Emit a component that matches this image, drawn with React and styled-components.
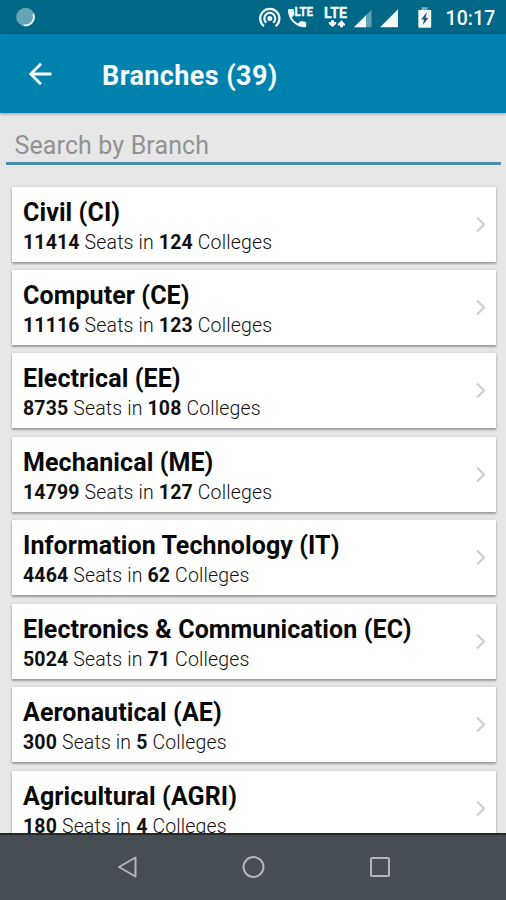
import React from "react";
import styled, { createGlobalStyle } from "styled-components";

const GlobalStyle = createGlobalStyle`
  * { box-sizing: border-box; }
  body { margin: 0; background: #e7e7e7; font-family: Roboto, sans-serif; }
`;

const Screen = styled.div`
  width: 506px;
  height: 900px;
  display: flex;
  flex-direction: column;
  overflow: hidden;
  background: #e7e7e7;
`;

const StatusBar = styled.header`
  flex: none;
  height: 34px;
  display: flex;
  justify-content: space-between;
  background: #006786;
  color: #f4fafc;
`;

const StatusIcons = styled.div`
  display: flex;
  height: 34px;
`;

const Clock = styled.time`
  width: 61px;
  padding: 1px 0 0 0.5px;
  font-size: 19.5px;
  line-height: 35px;
  font-weight: 500;
  letter-spacing: 0.1px;
  white-space: nowrap;
`;

const AppBar = styled.div`
  flex: none;
  height: 79px;
  padding-left: 28px;
  display: flex;
  align-items: center;
  background: #0082ae;
  color: #f7fbfd;
  box-shadow: 0 1px 3px rgba(0, 0, 0, 0.35);
  z-index: 1;
`;

const BackButton = styled.button`
  width: 24px;
  height: 24px;
  margin: 0 50px 0 0;
  padding: 0;
  border: 0;
  background: none;
  color: inherit;
  display: flex;
`;

const PageTitle = styled.h1`
  margin: 4px 0 0;
  font-size: 27px;
  line-height: 32px;
  font-weight: 700;
  letter-spacing: 0.4px;
`;

const SearchField = styled.input`
  flex: none;
  width: 495px;
  height: 46px;
  margin: 6px 0 0 6px;
  padding: 9px 9px 0 8.5px;
  border: 0;
  border-bottom: 3px solid #4b8dad;
  border-radius: 0;
  outline: 0;
  background: transparent;
  font: 400 25px Roboto, sans-serif;
  letter-spacing: 0.12px;
  &::placeholder { color: #929292; opacity: 1; }
`;

const BranchList = styled.main`
  flex: 1;
  min-height: 0;
  overflow: hidden;
  padding: 21.5px 10px 0 12px;
  display: flex;
  flex-direction: column;
  gap: 8.45px;
`;

const BranchCard = styled.article`
  flex: none;
  height: 75px;
  padding: 10px 6px 0 11px;
  display: flex;
  justify-content: space-between;
  background: #fff;
  box-shadow: 0 1.5px 2px rgba(0, 0, 0, 0.3), 0 0 3px rgba(0, 0, 0, 0.14);
`;

const BranchName = styled.h2`
  margin: 0;
  font-size: 25px;
  line-height: 32px;
  font-weight: 700;
  letter-spacing: 0.09px;
  color: #080808;
  white-space: nowrap;
`;

const Summary = styled.p`
  margin: 1px 0 0;
  font-size: 19.5px;
  line-height: 26px;
  font-weight: 300;
  letter-spacing: 0.15px;
  color: #111;
  white-space: nowrap;
  b { font-weight: 700; }
`;

const Chevron = styled.svg`
  width: 20px;
  height: 20px;
  margin-top: 17px;
`;

const NavBar = styled.nav`
  flex: none;
  height: 67px;
  padding: 0 0 2px 1px;
  display: flex;
  justify-content: center;
  align-items: center;
  gap: 102.5px;
  border-top: 2px solid #20292d;
  background: #464d53;
`;

const NavIcon = styled.svg`
  width: 24px;
  height: 24px;
  fill: none;
  stroke: #b0b6b9;
  stroke-width: 2;
`;

const branches = [
  ["Civil (CI)", 11414, 124],
  ["Computer (CE)", 11116, 123],
  ["Electrical (EE)", 8735, 108],
  ["Mechanical (ME)", 14799, 127],
  ["Information Technology (IT)", 4464, 62],
  ["Electronics & Communication (EC)", 5024, 71],
  ["Aeronautical (AE)", 300, 5],
  ["Agricultural (AGRI)", 180, 4],
];

function SyncIcon() {
  return (
    <svg width="48" height="34" viewBox="0 0 48 34">
      <circle cx="25.5" cy="17" r="9.300" fill="#65a3b7" />
      <path d="M33.500 14.500A8.500 8.500 0 0 1 24.500 25.300" fill="none" stroke="#d9eef3" strokeWidth="2" strokeLinecap="round" />
    </svg>
  );
}

function SystemIcons() {
  return (
    <svg width="192" height="34" viewBox="253 0 192 34" fill="currentColor">
      <g fill="none" stroke="currentColor" strokeWidth="2.200">
        <path d="M264 26.200A9.600 9.600 0 1 1 275.600 26.200" />
        <path d="M266.400 22.700A5.500 5.500 0 1 1 273.200 22.700" />
      </g>
      <circle cx="269.800" cy="18.500" r="2.500" />
      <path d="M289 9h3.700q1 0 1.100 1 .1 2 .7 3.700.2.8-.4 1.400L291.700 17.400q2.200 4.200 6.300 6.200l2.400-2.300q.6-.5 1.300-.3 1.800.6 3.500.7 1 .1 1 1.100v3.500q0 1-1 1C295.500 27.300 288 19.500 288 10q0-1 1-1z" />
      <g fontFamily="Roboto, sans-serif" fontWeight="700" stroke="currentColor" strokeWidth=".3">
        <text x="294.500" y="16" fontSize="12" textLength="18.500" lengthAdjust="spacingAndGlyphs">LTE</text>
        <text x="324" y="18" fontSize="14.500" textLength="23" lengthAdjust="spacingAndGlyphs">LTE</text>
      </g>
      <path d="M331 20.300h3v1.700h2.200v1.700L332.500 27.300 328.800 23.700V22H331zM340 27.300h3v-1.700h2v-1.700L341.500 20.300 337.800 24v1.600H340z" />
      <path d="M354 27.300L371.500 9.800v17.500z" opacity=".4" />
      <path d="M354 27.300L366 15.300v12zM380 27.300L398 9.300v18z" />
      <path d="M421.500 7.200h6V10h-6z" opacity=".5" />
      <path d="M419 10h11.500q.7 0 .7.700v16.400q0 .7-.7.700H419q-.7 0-.7-.7V10.700q0-.7.700-.7z" />
      <path d="M427 12l-5.800 7.500h2.800l-1.200 5.500 5.500-7h-2.800z" fill="#24507a" />
    </svg>
  );
}

export default function App() {
  return (
    <>
      <GlobalStyle />
      <Screen>
        <StatusBar>
          <SyncIcon />
          <StatusIcons>
            <SystemIcons />
            <Clock>10:17</Clock>
          </StatusIcons>
        </StatusBar>
        <AppBar>
          <BackButton aria-label="Back">
            <svg width="24" height="24" viewBox="0 0 24 24" fill="none" stroke="currentColor" strokeWidth="2.800">
              <path d="M23.500 12H3M13 1.800L2.800 12 13 22.200" />
            </svg>
          </BackButton>
          <PageTitle>Branches (39)</PageTitle>
        </AppBar>
        <SearchField placeholder="Search by Branch" />
        <BranchList>
          {branches.map(([name, seats, colleges]) => (
            <BranchCard key={name}>
              <div>
                <BranchName>{name}</BranchName>
                <Summary>
                  <b>{seats}</b> Seats in <b>{colleges}</b> Colleges
                </Summary>
              </div>
              <Chevron viewBox="0 0 20 20" fill="none" stroke="#cfcfcf" strokeWidth="2.200">
                <path d="M7 3.500l7 7-7 7" />
              </Chevron>
            </BranchCard>
          ))}
        </BranchList>
        <NavBar>
          <NavIcon viewBox="0 0 24 24">
            <path d="M4 12L20.500 2.500v19z" strokeLinejoin="round" />
          </NavIcon>
          <NavIcon viewBox="0 0 24 24">
            <circle cx="11.500" cy="12" r="10" />
          </NavIcon>
          <NavIcon viewBox="0 0 24 24">
            <rect x="3" y="3" width="18" height="18" rx="1" />
          </NavIcon>
        </NavBar>
      </Screen>
    </>
  );
}
